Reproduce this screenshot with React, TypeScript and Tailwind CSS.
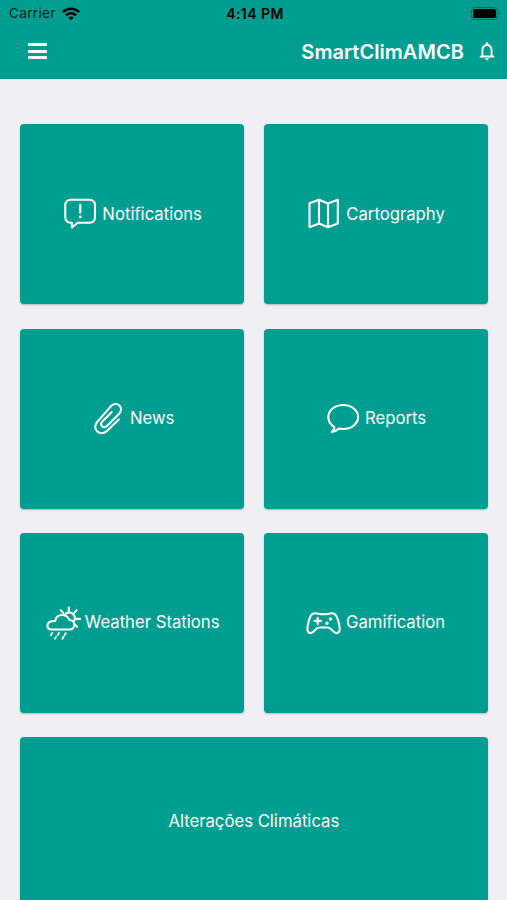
import type { ReactNode } from "react";
import { MdNotificationsNone } from "react-icons/md";

interface TileProps {
    label: string;
    className?: string;
    children?: ReactNode;
}

function Icon({ children }: { children: ReactNode }) {
    return (
        <svg
            className="mr-1 size-9 shrink-0"
            viewBox="0 0 36 36"
            fill="none"
            stroke="currentColor"
            strokeWidth="2.1"
            strokeLinecap="round"
            strokeLinejoin="round"
        >
            {children}
        </svg>
    );
}

function AlertBubbleIcon() {
    return (
        <Icon>
            <path d="M8.5 3.7h19.3a5.2 5.2 0 0 1 5.2 5.2v12.6a5.2 5.2 0 0 1-5.2 5.2H15.6l-5.7 4.8v-4.8H8.5a5.2 5.2 0 0 1-5.2-5.2V8.9a5.2 5.2 0 0 1 5.2-5.2Z" />
            <path d="M18.2 9v7.6" strokeWidth="2.3" />
            <path d="M18.2 20.8v.1" strokeWidth="2.8" />
        </Icon>
    );
}

function MapIcon() {
    return (
        <Icon>
            <path d="M3.5 7.3 13 3.8l9 3.7 9.8-3.7v23.7L22 31.2l-9-3.7-9.5 3.7Z" />
            <path d="M13 4v23.3M22 7.5v23.5" />
        </Icon>
    );
}

function PaperclipIcon() {
    return (
        <Icon>
            <path d="M28.8 18.6 17.2 29.8c-3.3 3.2-7.5 3-10.1.5-2.7-2.7-2.6-6.7.5-9.8L21 5.1c2.7-2.7 6.1-2.8 8.4-.6s2.2 5.7-.5 8.4L16.9 24.900c-1.600 1.600-3.600 1.600-4.900.3s-1.200-3.100.3-4.600l9.500-9.600" />
        </Icon>
    );
}

function BubbleIcon() {
    return (
        <Icon>
            <path d="M6.8 31C8.6 29.9 9.3 28.3 9.4 26.1 5.7 24 3.3 20.3 3.3 16 3.3 9.3 9.9 4 18.2 4s14.9 5.3 14.9 12-6.6 12-14.9 12c-1.6 0-3-.2-4.3-.5-1.9 2-4.3 3.3-7.1 3.5Z" />
        </Icon>
    );
}

function WeatherIcon() {
    return (
        <Icon>
            <path d="M6.8 24.5h17.4c3 0 5.2-2 5.2-4.700 0-2.800-2.200-4.800-5-4.800-1.300-3.200-4-5-7.200-5-3.800 0-6.500 2.500-7 6-4.500-.3-7.800 1.300-7.800 4.600 0 2.300 1.800 3.900 4.400 3.900Z" />
            <path d="M19.5 10.2a5.600 5.600 0 1 1 9 6.600" />
            <path d="M23.8 2.5V6M31.5 5.2l-2 2.500M31.800 13.900H35M29.900 19.400l2.200 2.300M15.800 5.300l2.300 2.600" />
            <path
                d="m7.300 28-1.500 2.200M14 28l-1.400 2.200M11 32l-1 1.700M20.800 28l-1.300 2.100M18.600 31.700l-1.200 2"
                strokeWidth="1.8"
            />
        </Icon>
    );
}

function GamepadIcon() {
    return (
        <Icon>
            <path d="M9.6 8.2c2.4 0 3 .9 5 .9h6c2 0 2.600-.9 5-.9 2.600 0 4.200 1 5.200 3.600 1.500 3.900 2.900 8.600 2.900 12.200 0 2.700-1.300 4.100-3.300 4.100-1.800 0-3-1.100-4.400-2.900-1.700-2.200-2.400-2.700-4.400-2.700h-8.100c-2 0-2.800.5-4.500 2.700-1.400 1.800-2.500 2.900-4.300 2.900-2 0-3.300-1.400-3.300-4.100 0-3.600 1.300-8.300 2.800-12.200 1-2.600 2.700-3.600 5.400-3.600Z" />
            <path d="M11.7 12.7v6.4M8.5 15.9h6.4" />
            <path d="M24.4 14v.01M21 18.2v.01" strokeWidth="3.4" />
        </Icon>
    );
}

function Tile({ label, className = "h-[180px]", children }: TileProps) {
    return (
        <button
            type="button"
            className={`flex items-center justify-center rounded-[4px] bg-[#009e90] text-white shadow-[0_1px_2px_rgba(0,0,0,0.25)] ${className}`}
        >
            {children}
            <span className="whitespace-nowrap text-[16.7px]">{label}</span>
        </button>
    );
}

function StatusBar() {
    return (
        <div className="grid h-[27px] grid-cols-3 items-center pl-[9px] pr-1.5 text-[#00201d]">
            <div className="flex items-center gap-1.5">
                <span className="text-[13.5px] tracking-[0.35px]">Carrier</span>
                <svg
                    className="h-3.5 w-[18px] text-black"
                    viewBox="0 0 18 14"
                    fill="none"
                    stroke="currentColor"
                    strokeWidth="2.5"
                >
                    <path d="M.9 5.1a11.6 11.6 0 0 1 16.2 0M4 8.3a7.2 7.2 0 0 1 10 0" />
                    <path
                        d="m9 13.5 2.6-2.8a3.8 3.8 0 0 0-5.2 0Z"
                        fill="currentColor"
                        stroke="none"
                    />
                </svg>
            </div>
            <span className="whitespace-nowrap text-center text-[14px] font-semibold tracking-[0.45px] text-black">
                4:14 PM
            </span>
            <svg
                className="h-[13px] w-[30px] justify-self-end"
                viewBox="0 0 30 13"
            >
                <rect
                    x=".5"
                    y=".5"
                    width="26"
                    height="12"
                    rx="3.5"
                    fill="none"
                    stroke="#00675e"
                />
                <rect x="2" y="2" width="23" height="9" rx="2" fill="#000" />
                <path d="M28 4.5c1.8.8 1.8 3.2 0 4Z" fill="#00675e" />
            </svg>
        </div>
    );
}

export default function App() {
    return (
        <div className="h-[900px] w-[507px] overflow-hidden bg-[#efeff4] font-['Inter',sans-serif]">
            <header className="h-[79px] bg-[#009e90]">
                <StatusBar />
                <div className="flex h-12 items-center pl-7 pr-[9.5px] text-white">
                    <button
                        type="button"
                        aria-label="Menu"
                        className="flex flex-col gap-[3.5px]"
                    >
                        <span className="h-[3px] w-[19px] rounded-[1px] bg-white" />
                        <span className="h-[3px] w-[19px] rounded-[1px] bg-white" />
                        <span className="h-[3px] w-[19px] rounded-[1px] bg-white" />
                    </button>
                    <h1 className="ml-auto mr-[11.5px] pt-px text-[20px] font-semibold tracking-[0.05px]">
                        SmartClimAMCB
                    </h1>
                    <MdNotificationsNone className="size-[22px]" />
                </div>
            </header>
            <main className="grid grid-cols-2 gap-x-[19.5px] gap-y-[24.3px] pl-[20.2px] pr-[19.5px] pt-[45.3px]">
                <Tile label="Notifications">
                    <AlertBubbleIcon />
                </Tile>
                <Tile label="Cartography">
                    <MapIcon />
                </Tile>
                <Tile label="News">
                    <PaperclipIcon />
                </Tile>
                <Tile label="Reports">
                    <BubbleIcon />
                </Tile>
                <Tile label="Weather Stations">
                    <WeatherIcon />
                </Tile>
                <Tile label="Gamification">
                    <GamepadIcon />
                </Tile>
                <Tile
                    label="Alterações Climáticas"
                    className="col-span-2 h-[168px]"
                />
            </main>
        </div>
    );
}
